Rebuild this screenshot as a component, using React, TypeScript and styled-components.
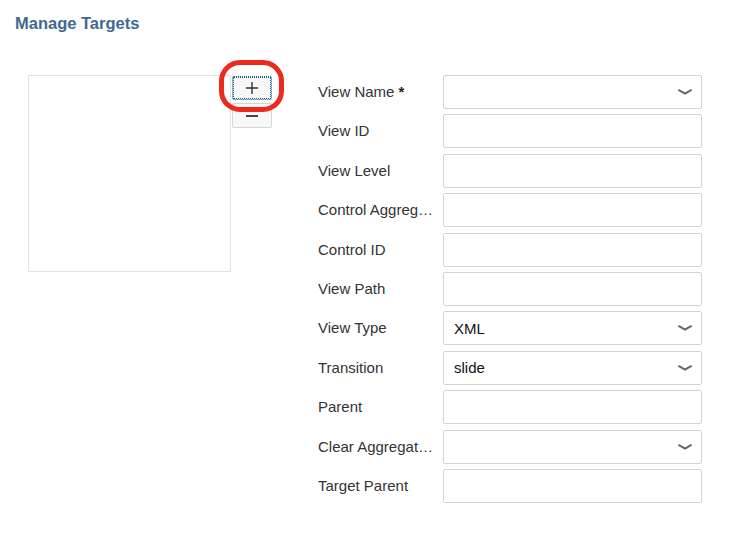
import React from 'react';
import styled, { createGlobalStyle } from 'styled-components';

const GlobalStyle = createGlobalStyle`
    html, body {
        margin: 0;
        padding: 0;
        background: #fff;
    }
    body {
        font-family: "Liberation Sans", Arial, sans-serif;
        color: #333;
    }
`

interface Field {
    label: string
    required?: boolean
    select?: boolean
    value?: string
}

const fields: Field[] = [
    { label: 'View Name', required: true, select: true },
    { label: 'View ID' },
    { label: 'View Level' },
    { label: 'Control Aggregation' },
    { label: 'Control ID' },
    { label: 'View Path' },
    { label: 'View Type', select: true, value: 'XML' },
    { label: 'Transition', select: true, value: 'slide' },
    { label: 'Parent' },
    { label: 'Clear Aggregation', select: true },
    { label: 'Target Parent' },
]

const Chevron: React.FC = () => (
    <svg width="14" height="6" viewBox="0 0 14 6">
        <path d="M1 1.2 L7 4.6 L13 1.2" fill="none" stroke="#666" strokeWidth="2" strokeLinecap="round" />
    </svg>
)

export default function App() {
    return (
        <Page>
            <GlobalStyle />
            <Title>Manage Targets</Title>
            <Body>
                <ListBox />
                <ButtonColumn>
                    <ToolButton focused aria-label="Add">
                        <svg width="12" height="12" viewBox="0 0 12 12">
                            <path d="M6 0 V12 M0 6 H12" stroke="#333" strokeWidth="1.4" />
                        </svg>
                    </ToolButton>
                    <ToolButton aria-label="Remove">
                        <svg width="12" height="4" viewBox="0 0 12 4">
                            <path d="M0 2 H12" stroke="#444" strokeWidth="2" />
                        </svg>
                    </ToolButton>
                    <Highlight />
                </ButtonColumn>
                <Form>
                    {fields.map(f => (
                        <React.Fragment key={f.label}>
                            <Label>
                                {f.label}
                                {f.required && <Star> *</Star>}
                            </Label>
                            {f.select ? (
                                <SelectBox>
                                    <span>{f.value}</span>
                                    <Chevron />
                                </SelectBox>
                            ) : (
                                <TextInput />
                            )}
                        </React.Fragment>
                    ))}
                </Form>
            </Body>
        </Page>
    )
}

const Page = styled.div`
    padding: 14px 15px;
`

const Title = styled.h2`
    margin: 0;
    font-size: 16.5px;
    line-height: 18px;
    font-weight: bold;
    color: #3f6991;
`

const Body = styled.div`
    display: flex;
    align-items: flex-start;
    margin-top: 43px;
`

const ListBox = styled.div`
    width: 201px;
    height: 195px;
    margin-left: 13px;
    border: 1px solid #e2e2dc;
`

const ButtonColumn = styled.div`
    position: relative;
    display: flex;
    flex-direction: column;
    gap: 3px;
    margin-left: 1px;
    margin-top: 1px;
`

const ToolButton = styled.button<{ focused?: boolean }>`
    width: 40px;
    height: 25px;
    padding: 0;
    display: flex;
    align-items: center;
    justify-content: center;
    background: #f7f7f7;
    border: 1px solid ${p => (p.focused ? '#1b5c8c' : '#d6d6d6')};
    border-style: ${p => (p.focused ? 'dotted' : 'solid')};
    border-radius: 2px;
    outline: ${p => (p.focused ? '1px dotted #1b5c8c' : 'none')};
    outline-offset: -2px;
    ${p => p.focused && 'height: 24px;'}
`

const Highlight = styled.div`
    position: absolute;
    left: -13px;
    top: -16px;
    width: 55px;
    height: 42px;
    border: 5px solid #ec2a1e;
    border-radius: 21px;
    pointer-events: none;
`

const Form = styled.div`
    display: grid;
    grid-template-columns: 125px 259px;
    row-gap: 5.4px;
    margin-left: 46px;
`

const Label = styled.div`
    font-size: 15px;
    line-height: 34px;
    height: 34px;
    padding-right: 8px;
    white-space: nowrap;
    overflow: hidden;
    text-overflow: ellipsis;
    color: #333;
`

const Star = styled.span`
    font-weight: bold;
    color: #222;
`

const TextInput = styled.input`
    box-sizing: border-box;
    width: 259px;
    height: 34px;
    margin: 0;
    border: 1px solid #d3d3d3;
    border-radius: 2px;
    background: #fff;
    outline: none;
`

const SelectBox = styled.div`
    box-sizing: border-box;
    width: 259px;
    height: 34px;
    display: flex;
    align-items: center;
    justify-content: space-between;
    padding: 0 9px 0 10px;
    border: 1px solid #d3d3d3;
    border-radius: 2px;
    font-size: 15px;
    color: #111;
`
